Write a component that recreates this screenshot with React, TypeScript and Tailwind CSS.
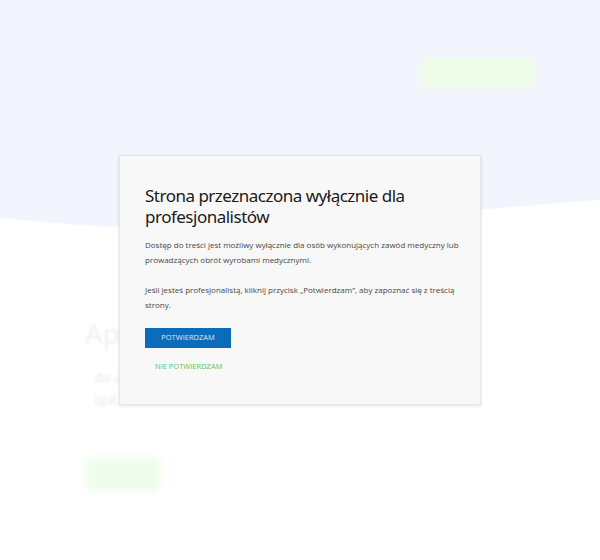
import React from "react";

export default function App() {
  return (
    <div className="relative w-[600px] h-[560px] overflow-hidden bg-white" style={{ fontFamily: '"Open Sans", "Noto Sans", sans-serif' }}>
      {/* background wave */}
      <svg width="600" height="240" viewBox="0 0 600 240" className="absolute left-0 top-0">
        <path d="M0 0 H600 V200 C500 206 380 222 260 228 C160 232 80 226 0 218 Z" fill="#f2f5fd" />
      </svg>

      {/* blurred page behind the modal */}
      <div className="relative flex flex-col pt-[58px]">
        <div className="flex justify-end pr-[65px]">
          <div className="w-[115px] h-[30px] rounded-md bg-[#effde9] blur-[3px]" />
        </div>
        <div className="flex flex-col items-start pl-[85px] mt-[228px]">
          <div className="text-[28px] leading-[34px] text-[#eef0f3] blur-[1px] font-medium">Ap</div>
          <div className="mt-[16px] pl-[10px] text-[13px] leading-[22px] text-[#e6e8eb] blur-[1px]">
            <div>do u</div>
            <div>(gal</div>
          </div>
          <div className="mt-[47px] w-[76px] h-[35px] rounded-lg bg-[#f0fdec] blur-[3px]" />
        </div>
      </div>

      {/* modal */}
      <div className="absolute left-[119px] top-[155px] w-[362px] h-[250px] bg-[#f8f8f8] border border-[#e6e6e6] shadow-[0_1px_3px_rgba(0,0,0,0.12)] pl-[25px] pr-[14px] pt-[29px] flex flex-col items-start">
        <h1 className="text-[17px] leading-[21px] text-[#1a1a1a] font-normal tracking-[-0.5px]" style={{ fontFamily: '"Noto Sans", sans-serif' }}>
          Strona przeznaczona wyłącznie dla<br />profesjonalistów
        </h1>
        <p className="mt-[10px] text-[8px] leading-[15px] text-[#474747]">
          Dostęp do treści jest możliwy wyłącznie dla osób wykonujących zawód medyczny lub prowadzących obrót wyrobami medycznymi.
        </p>
        <p className="mt-[15px] text-[8px] leading-[15px] text-[#474747]">
          Jeśli jesteś profesjonalistą, kliknij przycisk „Potwierdzam”, aby zapoznać się z treścią strony.
        </p>
        <button className="mt-[16px] w-[86px] h-[20px] bg-[#0b6dba] text-[#dbe8f5] text-[7.5px] uppercase flex items-center justify-center">
          Potwierdzam
        </button>
        <button className="mt-[13px] ml-[10px] text-[#5cc35a] text-[7.5px] leading-[10px] uppercase">
          Nie potwierdzam
        </button>
      </div>
    </div>
  );
}
